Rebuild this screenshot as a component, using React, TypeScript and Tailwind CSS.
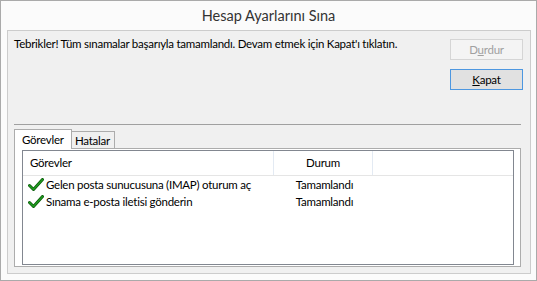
import React from "react";

const font = { fontFamily: 'Lato, "Liberation Sans", sans-serif' };

function Check() {
  return (
    <svg width="16" height="14" viewBox="0 0 16 14" className="shrink-0">
      <path d="M1.5 7.5 L5.5 11.5 L14.5 1.5" fill="none" stroke="#0a5a0a" strokeWidth="3" strokeLinecap="round" strokeLinejoin="round" />
      <path d="M1.5 7.5 L5.5 11.5 L14.5 1.5" fill="none" stroke="#1f9a1f" strokeWidth="1.6" strokeLinecap="round" strokeLinejoin="round" />
    </svg>
  );
}

export default function App() {
  const rows = [
    "Gelen posta sunucusuna (IMAP) oturum aç",
    "Sınama e-posta iletisi gönderin",
  ];
  return (
    <div className="w-[537px] h-[281px] border border-[#aaaaaa] bg-[#fbfbfb] flex flex-col text-[11.5px] tracking-[-0.25px] text-[#000] whitespace-nowrap" style={font}>
      <div className="h-[29px] flex items-center justify-center text-[14.5px] tracking-[0px] text-[#333333]">Hesap Ayarlarını Sına</div>
      <div className="ml-[6px] mr-[5px] h-[244px] border border-[#cccccc] bg-[#f0f0f0] flex flex-col">
        <div className="h-[93px] flex">
          <div className="flex-1 pl-[6px] pt-[5px] leading-[16px]">
            Tebrikler! Tüm sınamalar başarıyla tamamlandı. Devam etmek için Kapat'ı tıklatın.
          </div>
          <div className="flex flex-col gap-[9px] pt-[8px] pr-[7px]">
            <div className="w-[73px] h-[21px] border border-[#d5d5d5] bg-[#f4f4f4] text-[#a0a0a0] flex items-center justify-center leading-none">
              <span>D<span className="underline">u</span>rdur</span>
            </div>
            <div className="w-[73px] h-[21px] border border-[#4d97e0] bg-[#e1e1e1] flex items-center justify-center leading-none">
              <span><span className="underline">K</span>apat</span>
            </div>
          </div>
        </div>
        <div className="ml-[6px] mr-[9px] h-px bg-[#a0a0a0]" />
        <div className="mt-[4px] ml-[6px] h-[19px] flex items-end">
          <div className="relative z-10 w-[58px] h-[20px] mb-[-1px] border border-b-0 border-[#acacac] bg-white flex items-start pl-[7px] pt-[2px] leading-[16px]">
            Görevler
          </div>
          <div className="w-[43px] h-[17px] border border-l-0 border-b-0 border-[#acacac] bg-[#f0f0f0] flex items-start pl-[3px] pt-[1px] leading-[16px]">
            Hatalar
          </div>
        </div>
        <div className="ml-[6px] mr-[9px] h-[119px] border border-[#acacac] bg-white flex flex-col">
          <div className="ml-[7px] mr-[6px] mt-[1px] h-[115px] border border-[#828790] bg-white flex flex-col">
            <div className="h-[25px] flex border-b border-[#e5e5e5]">
              <div className="w-[251px] border-r border-[#e3eaf3] pl-[7px] flex items-center">Görevler</div>
              <div className="w-[99px] border-r border-[#e3eaf3] flex items-center justify-center">Durum</div>
              <div className="flex-1" />
            </div>
            {rows.map((r) => (
              <div key={r} className="h-[17px] flex items-center">
                <div className="w-[252px] pl-[5px] flex items-center gap-[2px]">
                  <Check />
                  <span>{r}</span>
                </div>
                <div className="w-[99px] flex justify-center">Tamamlandı</div>
              </div>
            ))}
          </div>
        </div>
      </div>
    </div>
  );
}
